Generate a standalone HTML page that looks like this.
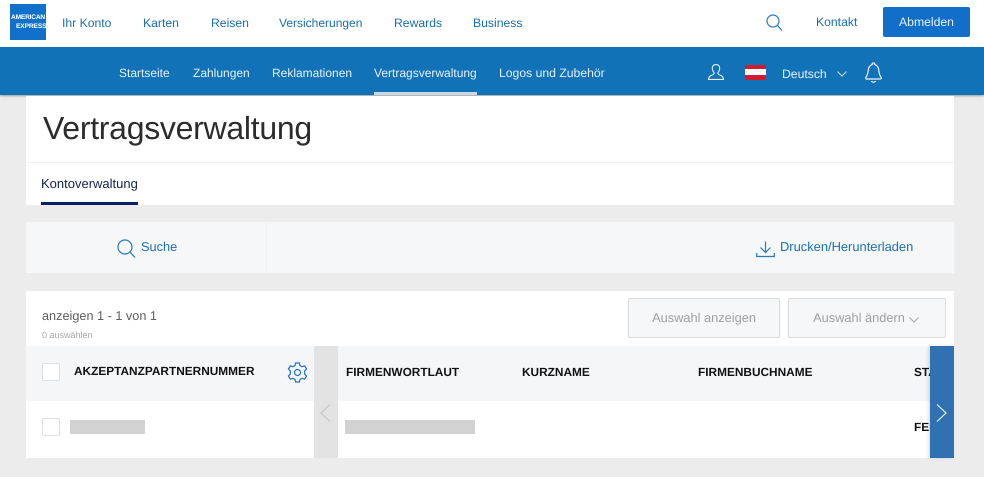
<!DOCTYPE html>
<html lang="de"><head><meta charset="utf-8"><title>Vertragsverwaltung</title>
<style>
html,body{margin:0;padding:0}
body{width:984px;height:477px;overflow:hidden;position:relative;background:#ececec;font-family:"Liberation Sans",sans-serif;font-size:12.2px;color:#1d6fb0;text-rendering:geometricPrecision}
.a{position:absolute}
.t{position:absolute;white-space:nowrap;line-height:16px}
.w{color:#e6eff7;font-size:12px}
.h{color:#111;font-weight:bold;font-size:11.85px;}
.cb{position:absolute;width:16px;height:16px;background:#fff;border:1px solid #e0e0e0;border-radius:2px}
.g{position:absolute;background:#d2d2d2}
.btn{position:absolute;background:#f6f7f9;border:1px solid #dcdcdc;border-radius:2px;box-sizing:border-box;color:#a0a0a0;font-size:12.8px;text-align:center;line-height:38px;top:298px;height:40px}
svg{position:absolute;overflow:visible;fill:none}
</style></head><body>
<div class="a" style="left:0;top:0;width:984px;height:47px;background:#fff"></div>
<div class="a" style="left:10px;top:4px;width:36px;height:36px;background:#1170c9;overflow:hidden">
<div class="t" style="left:0;top:10px;width:36px;font-size:6.6px;line-height:8px;color:#fff;letter-spacing:-.2px;font-weight:bold;text-align:center;">AMERICAN</div>
<div class="t" style="left:6px;top:19px;width:30px;font-size:6.6px;line-height:8px;color:#fff;letter-spacing:-.1px;font-weight:bold;text-align:right;">EXPRESS</div>
</div>
<div class="t" style="left:62px;top:15px">Ihr Konto</div>
<div class="t" style="left:143px;top:15px">Karten</div>
<div class="t" style="left:211px;top:15px">Reisen</div>
<div class="t" style="left:279px;top:15px;font-size:12px">Versicherungen</div>
<div class="t" style="left:394px;top:15px">Rewards</div>
<div class="t" style="left:473px;top:15px">Business</div>
<svg style="left:766px;top:14px" width="17" height="17" stroke="#2a78bd" stroke-width="1.2"><circle cx="7" cy="7" r="6"/><path d="M11.3 11.3 L16 16.5"/></svg>
<div class="t" style="left:816px;top:14px">Kontakt</div>
<div class="a" style="left:883px;top:7px;width:87px;height:30px;background:#116fc9;border-radius:2px;color:#e8f1fa;text-align:center;line-height:30px;font-size:12.2px">Abmelden</div>

<div class="a" style="left:0;top:47px;width:984px;height:48px;background:#1172b8;box-shadow:0 1px 2px rgba(0,0,0,.35)"></div>
<div class="t w" style="left:119px;top:65px">Startseite</div>
<div class="t w" style="left:193px;top:65px">Zahlungen</div>
<div class="t w" style="left:272px;top:65px">Reklamationen</div>
<div class="t w" style="left:374px;top:65px">Vertragsverwaltung</div>
<div class="t w" style="left:499px;top:65px;font-size:12.2px">Logos und Zubehör</div>
<div class="a" style="left:374px;top:92px;width:103px;height:3px;background:#c9d9e8"></div>
<svg style="left:708px;top:64px" width="16" height="16" stroke="#e8f1f8" stroke-width="1.1"><path d="M8 .6 C5.2 .6 4 2.6 4.3 5 C4.5 7 5.5 8 6.2 8.8 C6.5 9.8 5.5 10.5 3.5 11.3 C1.5 12 .6 13 .6 15.4 H15.4 C15.4 13 14.5 12 12.5 11.3 C10.5 10.5 9.5 9.8 9.8 8.8 C10.5 8 11.5 7 11.7 5 C12 2.6 10.8 .6 8 .6Z"/></svg>
<div class="a" style="left:745px;top:65px;width:21px;height:15px;background:#d01c2e"></div>
<div class="a" style="left:745px;top:69px;width:21px;height:6px;background:#fff"></div>
<div class="t w" style="left:782px;top:66px;font-size:12.2px">Deutsch</div>
<svg style="left:837px;top:71px" width="10" height="6" stroke="#cfe0ef" stroke-width="1"><path d="M.5 .5 L5 5 L9.5 .5"/></svg>
<svg style="left:865px;top:62px" width="17" height="22" stroke="#f0f5fa" stroke-width="1.2"><path d="M8.5 .8 C7.5 .8 7 1.6 7.2 2.6 C4.5 3.5 3.5 5.5 3.2 8.5 C2.9 11.5 2.3 13.5 .8 15.5 C.5 16.2 .8 17 1.6 17 H15.4 C16.2 17 16.5 16.2 16.2 15.5 C14.7 13.5 14.1 11.5 13.8 8.5 C13.5 5.5 12.5 3.5 9.8 2.6 C10 1.6 9.5 .8 8.5 .8Z"/><path d="M6.5 19 C7 20.6 10 20.6 10.5 19"/></svg>

<div class="a" style="left:26px;top:96px;width:928px;height:109px;background:#fff"></div>
<div class="a" style="left:26px;top:162px;width:928px;height:1px;background:#f1f1f1"></div>
<div class="t" style="left:43px;top:109px;font-size:32px;line-height:38px;color:#2c2c2c;letter-spacing:-.28px">Vertragsverwaltung</div>
<div class="t" style="left:41px;top:176px;color:#12224f;font-size:13px">Kontoverwaltung</div>
<div class="a" style="left:41px;top:202px;width:97px;height:3px;background:#0a2264"></div>

<div class="a" style="left:26px;top:222px;width:928px;height:51px;background:#f5f7f9"></div>
<div class="a" style="left:266px;top:222px;width:1px;height:51px;background:#f0f1f3"></div>
<svg style="left:117px;top:239px" width="19" height="19" stroke="#2a78b5" stroke-width="1.2"><circle cx="8" cy="8" r="7"/><path d="M13 13 L18 18.5"/></svg>
<div class="t" style="left:141px;top:239px;font-size:12.8px">Suche</div>
<svg style="left:756px;top:241px" width="19" height="16" stroke="#2a78b5" stroke-width="1.2"><path d="M9.5 .5 V11.5 M4.5 6.5 L9.5 11.5 L14.5 6.5 M.7 12 V15.5 H18.3 V12"/></svg>
<div class="t" style="left:780px;top:239px;font-size:12.9px">Drucken/Herunterladen</div>

<div class="a" style="left:26px;top:291px;width:928px;height:167px;background:#fff"></div>
<div class="t" style="left:42px;top:308px;color:#5e5e5e;font-size:12.7px;">anzeigen 1 - 1 von 1</div>
<div class="t" style="left:42px;top:327px;color:#a8a8a8;font-size:9px">0 auswählen</div>
<div class="btn" style="left:628px;width:152px">Auswahl anzeigen</div>
<div class="btn" style="left:788px;width:158px;padding-right:16px">Auswahl ändern</div>
<svg style="left:909px;top:317px" width="10" height="6" stroke="#a8a8a8" stroke-width="1"><path d="M.5 .5 L5 5 L9.5 .5"/></svg>

<div class="a" style="left:26px;top:346px;width:928px;height:55px;background:#f5f6f8"></div>
<div class="cb" style="left:42px;top:363px"></div>
<div class="t h" style="left:74px;top:363px">AKZEPTANZPARTNERNUMMER</div>
<svg style="left:287px;top:362px" width="21" height="21" viewBox="0 0 21 21" stroke="#1d71b8" stroke-width="1.2"><circle cx="10.5" cy="10.5" r="3"/><path d="M8.6 1 H12.4 L13 3.6 L15.2 4.7 L17.6 3.8 L19.6 7 L17.7 8.8 V12.2 L19.6 14 L17.6 17.2 L15.2 16.3 L13 17.4 L12.4 20 H8.6 L8 17.4 L5.8 16.3 L3.4 17.2 L1.4 14 L3.3 12.2 V8.8 L1.4 7 L3.4 3.8 L5.8 4.7 L8 3.6Z" stroke-linejoin="round"/></svg>
<div class="cb" style="left:42px;top:418px"></div>
<div class="g" style="left:70px;top:420px;width:75px;height:14px"></div>
<div class="a" style="left:314px;top:346px;width:24px;height:112px;background:#e3e3e3"></div>
<svg style="left:320px;top:404px" width="11" height="18" stroke="#c6c6c6" stroke-width="1.2"><path d="M10 .5 L1 9 L10 17.5"/></svg>
<div class="t h" style="left:346px;top:364px">FIRMENWORTLAUT</div>
<div class="t h" style="left:522px;top:364px">KURZNAME</div>
<div class="t h" style="left:698px;top:364px">FIRMENBUCHNAME</div>
<div class="t h" style="left:914px;top:364px;width:16px;overflow:hidden">STATUS</div>
<div class="g" style="left:345px;top:420px;width:130px;height:14px"></div>
<div class="t h" style="left:914px;top:419px;width:16px;overflow:hidden">FEHLT</div>
<div class="a" style="left:930px;top:346px;width:24px;height:112px;background:#3071b1;box-shadow:-2px 0 3px rgba(0,0,0,.12)"></div>
<svg style="left:936px;top:404px" width="11" height="18" stroke="#eef3f8" stroke-width="1.2"><path d="M1 .5 L10 9 L1 17.5"/></svg>
</body></html>
